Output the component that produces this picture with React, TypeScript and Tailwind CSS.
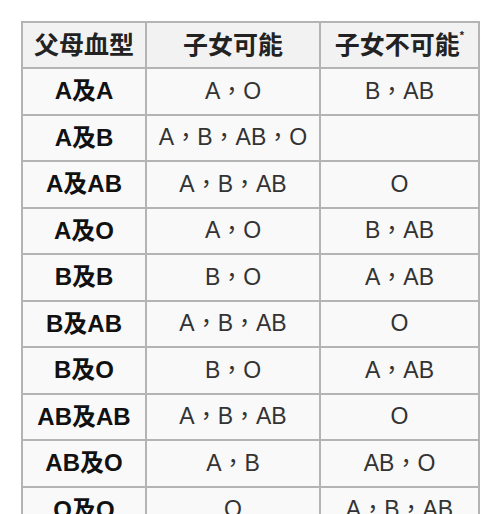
const rows: [string, string, string][] = [
  ["A及A", "A，O", "B，AB"],
  ["A及B", "A，B，AB，O", ""],
  ["A及AB", "A，B，AB", "O"],
  ["A及O", "A，O", "B，AB"],
  ["B及B", "B，O", "A，AB"],
  ["B及AB", "A，B，AB", "O"],
  ["B及O", "B，O", "A，AB"],
  ["AB及AB", "A，B，AB", "O"],
  ["AB及O", "A，B", "AB，O"],
  ["O及O", "O", "A，B，AB"],
];

export default function App() {
  return (
    <div
      className="h-[514px] w-[500px] overflow-hidden bg-white pl-[21px] pt-[21px]"
      style={{ fontFamily: '"Liberation Sans", "Noto Sans CJK TC", sans-serif' }}
    >
      <table className="border-collapse text-[23px] leading-none">
        <thead>
          <tr className="h-[46px] bg-[#f2f2f2] text-[25px] text-[#222]">
            <th className="w-[124px] border-2 border-[#b4b4b4] font-bold">父母血型</th>
            <th className="w-[174px] border-2 border-[#b4b4b4] font-bold">子女可能</th>
            <th className="w-[159px] border-2 border-[#b4b4b4] font-bold">
              子女不可能<sup className="align-super text-[11px]">*</sup>
            </th>
          </tr>
        </thead>
        <tbody>
          {rows.map(([parents, possible, impossible]) => (
            <tr key={parents} className="h-[46.5px] bg-[#f9f9f9] text-center">
              <td className="border-2 border-[#b4b4b4] text-[24px] font-bold text-[#111]">{parents}</td>
              <td className="border-2 border-[#b4b4b4] text-[#333]">{possible}</td>
              <td className="border-2 border-[#b4b4b4] text-[#333]">{impossible}</td>
            </tr>
          ))}
        </tbody>
      </table>
    </div>
  );
}
